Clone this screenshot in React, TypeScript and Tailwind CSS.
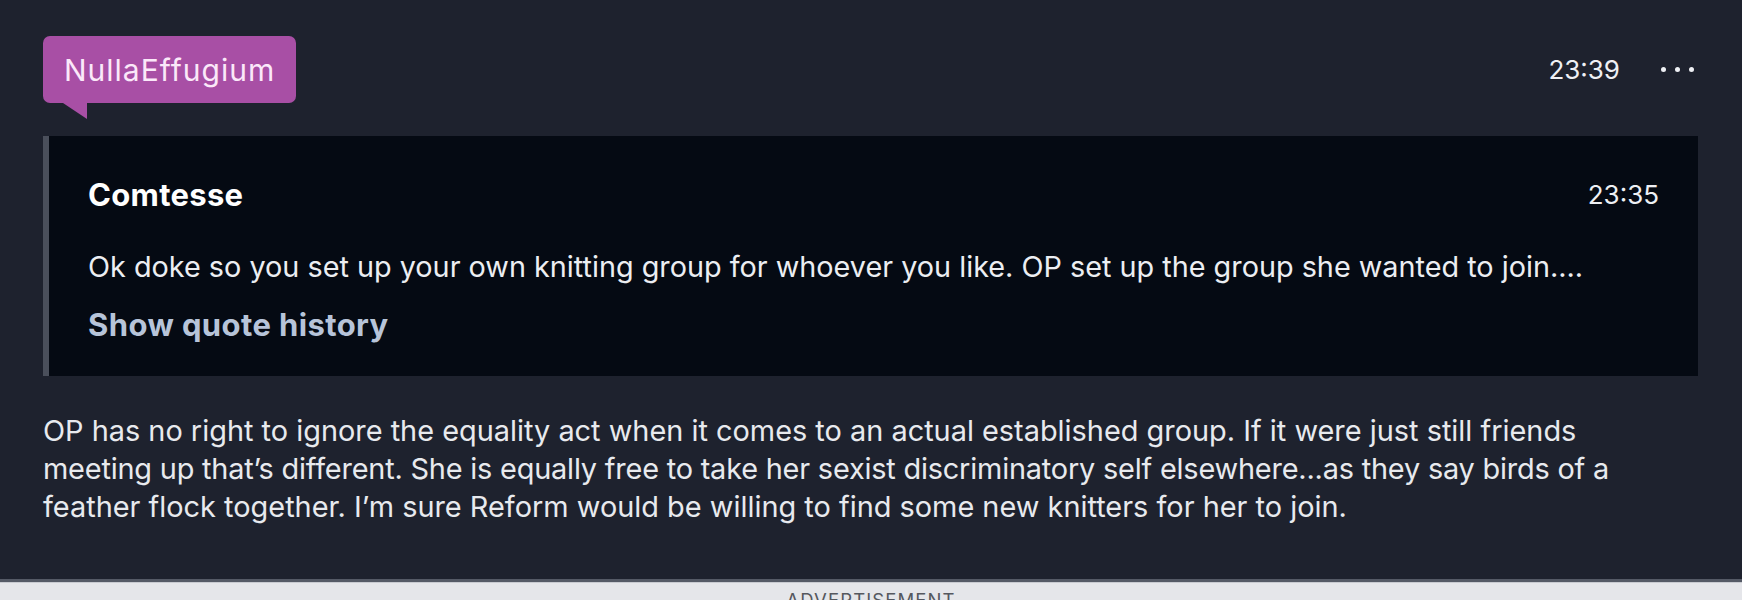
import React from "react";

function UserBadge({ name }: { name: string }) {
  return (
    <div className="relative flex h-[67px] items-center rounded-[7px] bg-[#a84fa5] px-[21px]">
      <span className="text-[30px] leading-none tracking-[1px] text-[#fbe8f9]">{name}</span>
      {/* speech bubble tail */}
      <svg
        className="absolute left-[20px] top-full"
        width="24"
        height="16"
        viewBox="0 0 24 16"
      >
        <polygon points="0,0 24,0 24,16" fill="#a84fa5" />
      </svg>
    </div>
  );
}

function MoreDots() {
  return (
    <div className="flex items-center gap-[9px]">
      <span className="h-[5px] w-[5px] rounded-full bg-[#eef0f4]" />
      <span className="h-[5px] w-[5px] rounded-full bg-[#eef0f4]" />
      <span className="h-[5px] w-[5px] rounded-full bg-[#eef0f4]" />
    </div>
  );
}

function QuoteBlock() {
  return (
    <div className="mt-[33px] h-[240px] border-l-[6px] border-[#4a4f5b] bg-[#050a13] px-[39px] pt-[42px]">
      <div className="flex items-start justify-between">
        <span className="text-[31px] font-bold leading-[34px] tracking-[0.3px] text-white">Comtesse</span>
        <span className="text-[26px] leading-[34px] text-[#eef0f4]">23:35</span>
      </div>
      <p className="mt-[38px] text-[28.8px] leading-[34px] text-[#eceef2]">
        Ok doke so you set up your own knitting group for whoever you like. OP set up the group she wanted to join....
      </p>
      <button className="mt-[24px] text-[31px] font-bold leading-[34px] tracking-[0.4px] text-[#b7c4d9]">
        Show quote history
      </button>
    </div>
  );
}

export default function App() {
  return (
    <div className="min-h-screen overflow-hidden bg-[#1e222e] font-['Inter',sans-serif] text-[#eceef2]">
      <div className="pl-[43px] pr-[44px] pt-[36px]">
        <div className="flex items-center justify-between">
          <UserBadge name="NullaEffugium" />
          <div className="flex items-center gap-[41px] pr-[4px]">
            <span className="text-[26px] leading-none text-[#eef0f4]">23:39</span>
            <MoreDots />
          </div>
        </div>

        <QuoteBlock />

        <p className="mt-[36px] text-[28.9px] leading-[38px] text-[#e8eaee]">
          OP has no right to ignore the equality act when it comes to an actual established group. If it were just still friends
          <br />
          <span className="tracking-[-0.2px]">
            meeting up that’s different. She is equally free to take her sexist discriminatory self elsewhere...as they say birds of a
          </span>
          <br />
          feather flock together. I’m sure Reform would be willing to find some new knitters for her to join.
        </p>
      </div>

      <div className="mt-[53px] border-t-[3px] border-[#555a66]">
        <div className="flex h-[40px] justify-center border-t border-[#c9cbd1] bg-[#e5e6ea] pt-[8px]">
          <span className="text-[18.5px] leading-none tracking-[0.06em] text-[#55585f]">ADVERTISEMENT</span>
        </div>
      </div>
    </div>
  );
}
